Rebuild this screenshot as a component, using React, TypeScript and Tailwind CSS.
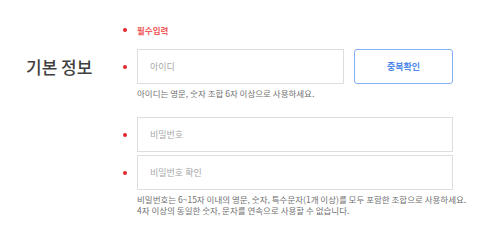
import React from "react"

const font = { fontFamily: '"Noto Sans CJK KR", "Noto Sans", sans-serif' }

function Dot() {
  return <span className="block w-[4px] h-[4px] rounded-full bg-[#e3262d] shrink-0" />
}

function Field({ placeholder, className = "" }: { placeholder: string; className?: string }) {
  return (
    <div className={`h-[35px] border border-[#dedede] bg-white flex items-center pl-[12px] ${className}`}>
      <span className="text-[9px] text-[#a8a8a8]">{placeholder}</span>
    </div>
  )
}

export default function App() {
  return (
    <div className="w-[500px] h-[248px] bg-white overflow-hidden" style={font}>
      <div className="flex pt-[24px]">
        <div className="w-[123px] pl-[26px]">
          <div className="mt-[25px] h-[35px] flex items-center text-[17px] font-medium text-[#3f3f3f]">
            기본 정보
          </div>
        </div>

        <div className="w-[330px] flex flex-col">
          <div className="h-[12px] flex items-center gap-[10px]">
            <Dot />
            <span className="text-[8.5px] font-bold text-[#ef5a5a]">필수입력</span>
          </div>

          <div className="mt-[13px] flex items-center gap-[10px]">
            <Dot />
            <div className="flex-1 flex gap-[10px]">
              <Field placeholder="아이디" className="w-[207px]" />
              <button className="w-[99px] h-[35px] rounded-[3px] border border-[#86b0f5] bg-white text-[9px] font-bold text-[#4f87ea]">
                중복확인
              </button>
            </div>
          </div>
          <p className="mt-[4px] ml-[14px] text-[8.5px] leading-[11px] text-[#707070] whitespace-nowrap">
            아이디는 영문, 숫자 조합 6자 이상으로 사용하세요.
          </p>

          <div className="mt-[18px] flex items-center gap-[10px]">
            <Dot />
            <Field placeholder="비밀번호" className="flex-1" />
          </div>
          <div className="mt-[3px] flex items-center gap-[10px]">
            <Dot />
            <Field placeholder="비밀번호 확인" className="flex-1" />
          </div>
          <p className="mt-[4px] ml-[14px] text-[8.5px] leading-[11px] text-[#707070] whitespace-nowrap">
            비밀번호는 6~15자 이내의 영문, 숫자, 특수문자(1개 이상)를 모두 포함한 조합으로 사용하세요.
            <br />
            4자 이상의 동일한 숫자, 문자를 연속으로 사용할 수 없습니다.
          </p>
        </div>
      </div>
    </div>
  )
}
